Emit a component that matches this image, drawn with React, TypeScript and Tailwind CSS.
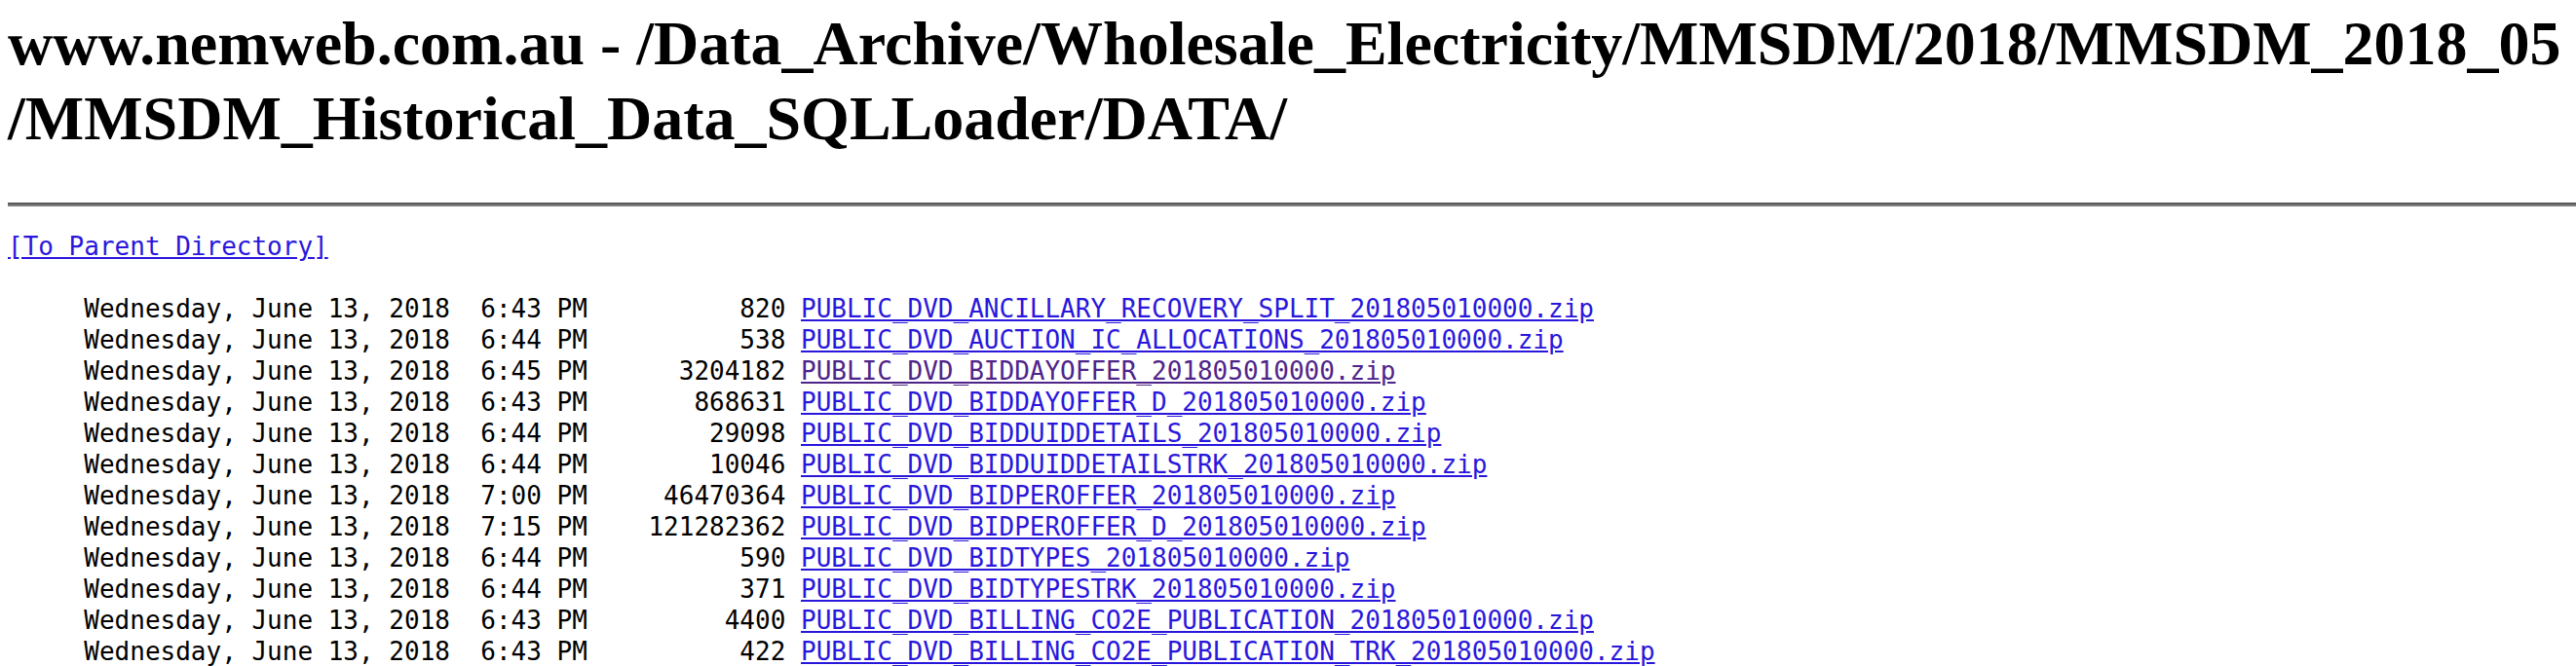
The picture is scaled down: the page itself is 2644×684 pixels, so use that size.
import React from "react";

const rows: [string, string, string, boolean?][] = [
  ["6:43", "820", "PUBLIC_DVD_ANCILLARY_RECOVERY_SPLIT_201805010000.zip"],
  ["6:44", "538", "PUBLIC_DVD_AUCTION_IC_ALLOCATIONS_201805010000.zip"],
  ["6:45", "3204182", "PUBLIC_DVD_BIDDAYOFFER_201805010000.zip", true],
  ["6:43", "868631", "PUBLIC_DVD_BIDDAYOFFER_D_201805010000.zip"],
  ["6:44", "29098", "PUBLIC_DVD_BIDDUIDDETAILS_201805010000.zip"],
  ["6:44", "10046", "PUBLIC_DVD_BIDDUIDDETAILSTRK_201805010000.zip"],
  ["7:00", "46470364", "PUBLIC_DVD_BIDPEROFFER_201805010000.zip"],
  ["7:15", "121282362", "PUBLIC_DVD_BIDPEROFFER_D_201805010000.zip"],
  ["6:44", "590", "PUBLIC_DVD_BIDTYPES_201805010000.zip"],
  ["6:44", "371", "PUBLIC_DVD_BIDTYPESTRK_201805010000.zip"],
  ["6:43", "4400", "PUBLIC_DVD_BILLING_CO2E_PUBLICATION_201805010000.zip"],
  ["6:43", "422", "PUBLIC_DVD_BILLING_CO2E_PUBLICATION_TRK_201805010000.zip"],
];

export default function App() {
  return (
    <div className="w-full h-[684px] overflow-hidden bg-white text-black pl-[8px]">
      <h1
        className="pt-[6px] text-[64px] leading-[77px] font-bold whitespace-nowrap"
        style={{ fontFamily: '"Liberation Serif", "Times New Roman", serif' }}
      >
        www.nemweb.com.au - /Data_Archive/Wholesale_Electricity/MMSDM/2018/MMSDM_2018_05
        <br />
        /MMSDM_Historical_Data_SQLLoader/DATA/
      </h1>
      <div className="mt-[48px] h-[4px] border-t-2 border-b-2 border-t-[#5a5a5a] border-b-[#7e7e7e]" />
      <pre
        className="mt-[25px] text-[26px] leading-[32px] whitespace-pre"
        style={{ fontFamily: '"DejaVu Sans Mono", "Liberation Mono", monospace' }}
      >
        <a href="#" className="text-[#2a17dc] underline">[To Parent Directory]</a>
        {"\n\n"}
        {rows.map(([time, size, name, visited], i) => (
          <React.Fragment key={i}>
            {(`Wednesday, June 13, 2018 ${time.padStart(5, " ")} PM`).padStart(38, " ")}
            {" "}
            {size.padStart(12, " ")}
            {" "}
            <a href="#" className={visited ? "text-[#4f2489] underline" : "text-[#2a17dc] underline"}>
              {name}
            </a>
            {"\n"}
          </React.Fragment>
        ))}
      </pre>
    </div>
  );
}
